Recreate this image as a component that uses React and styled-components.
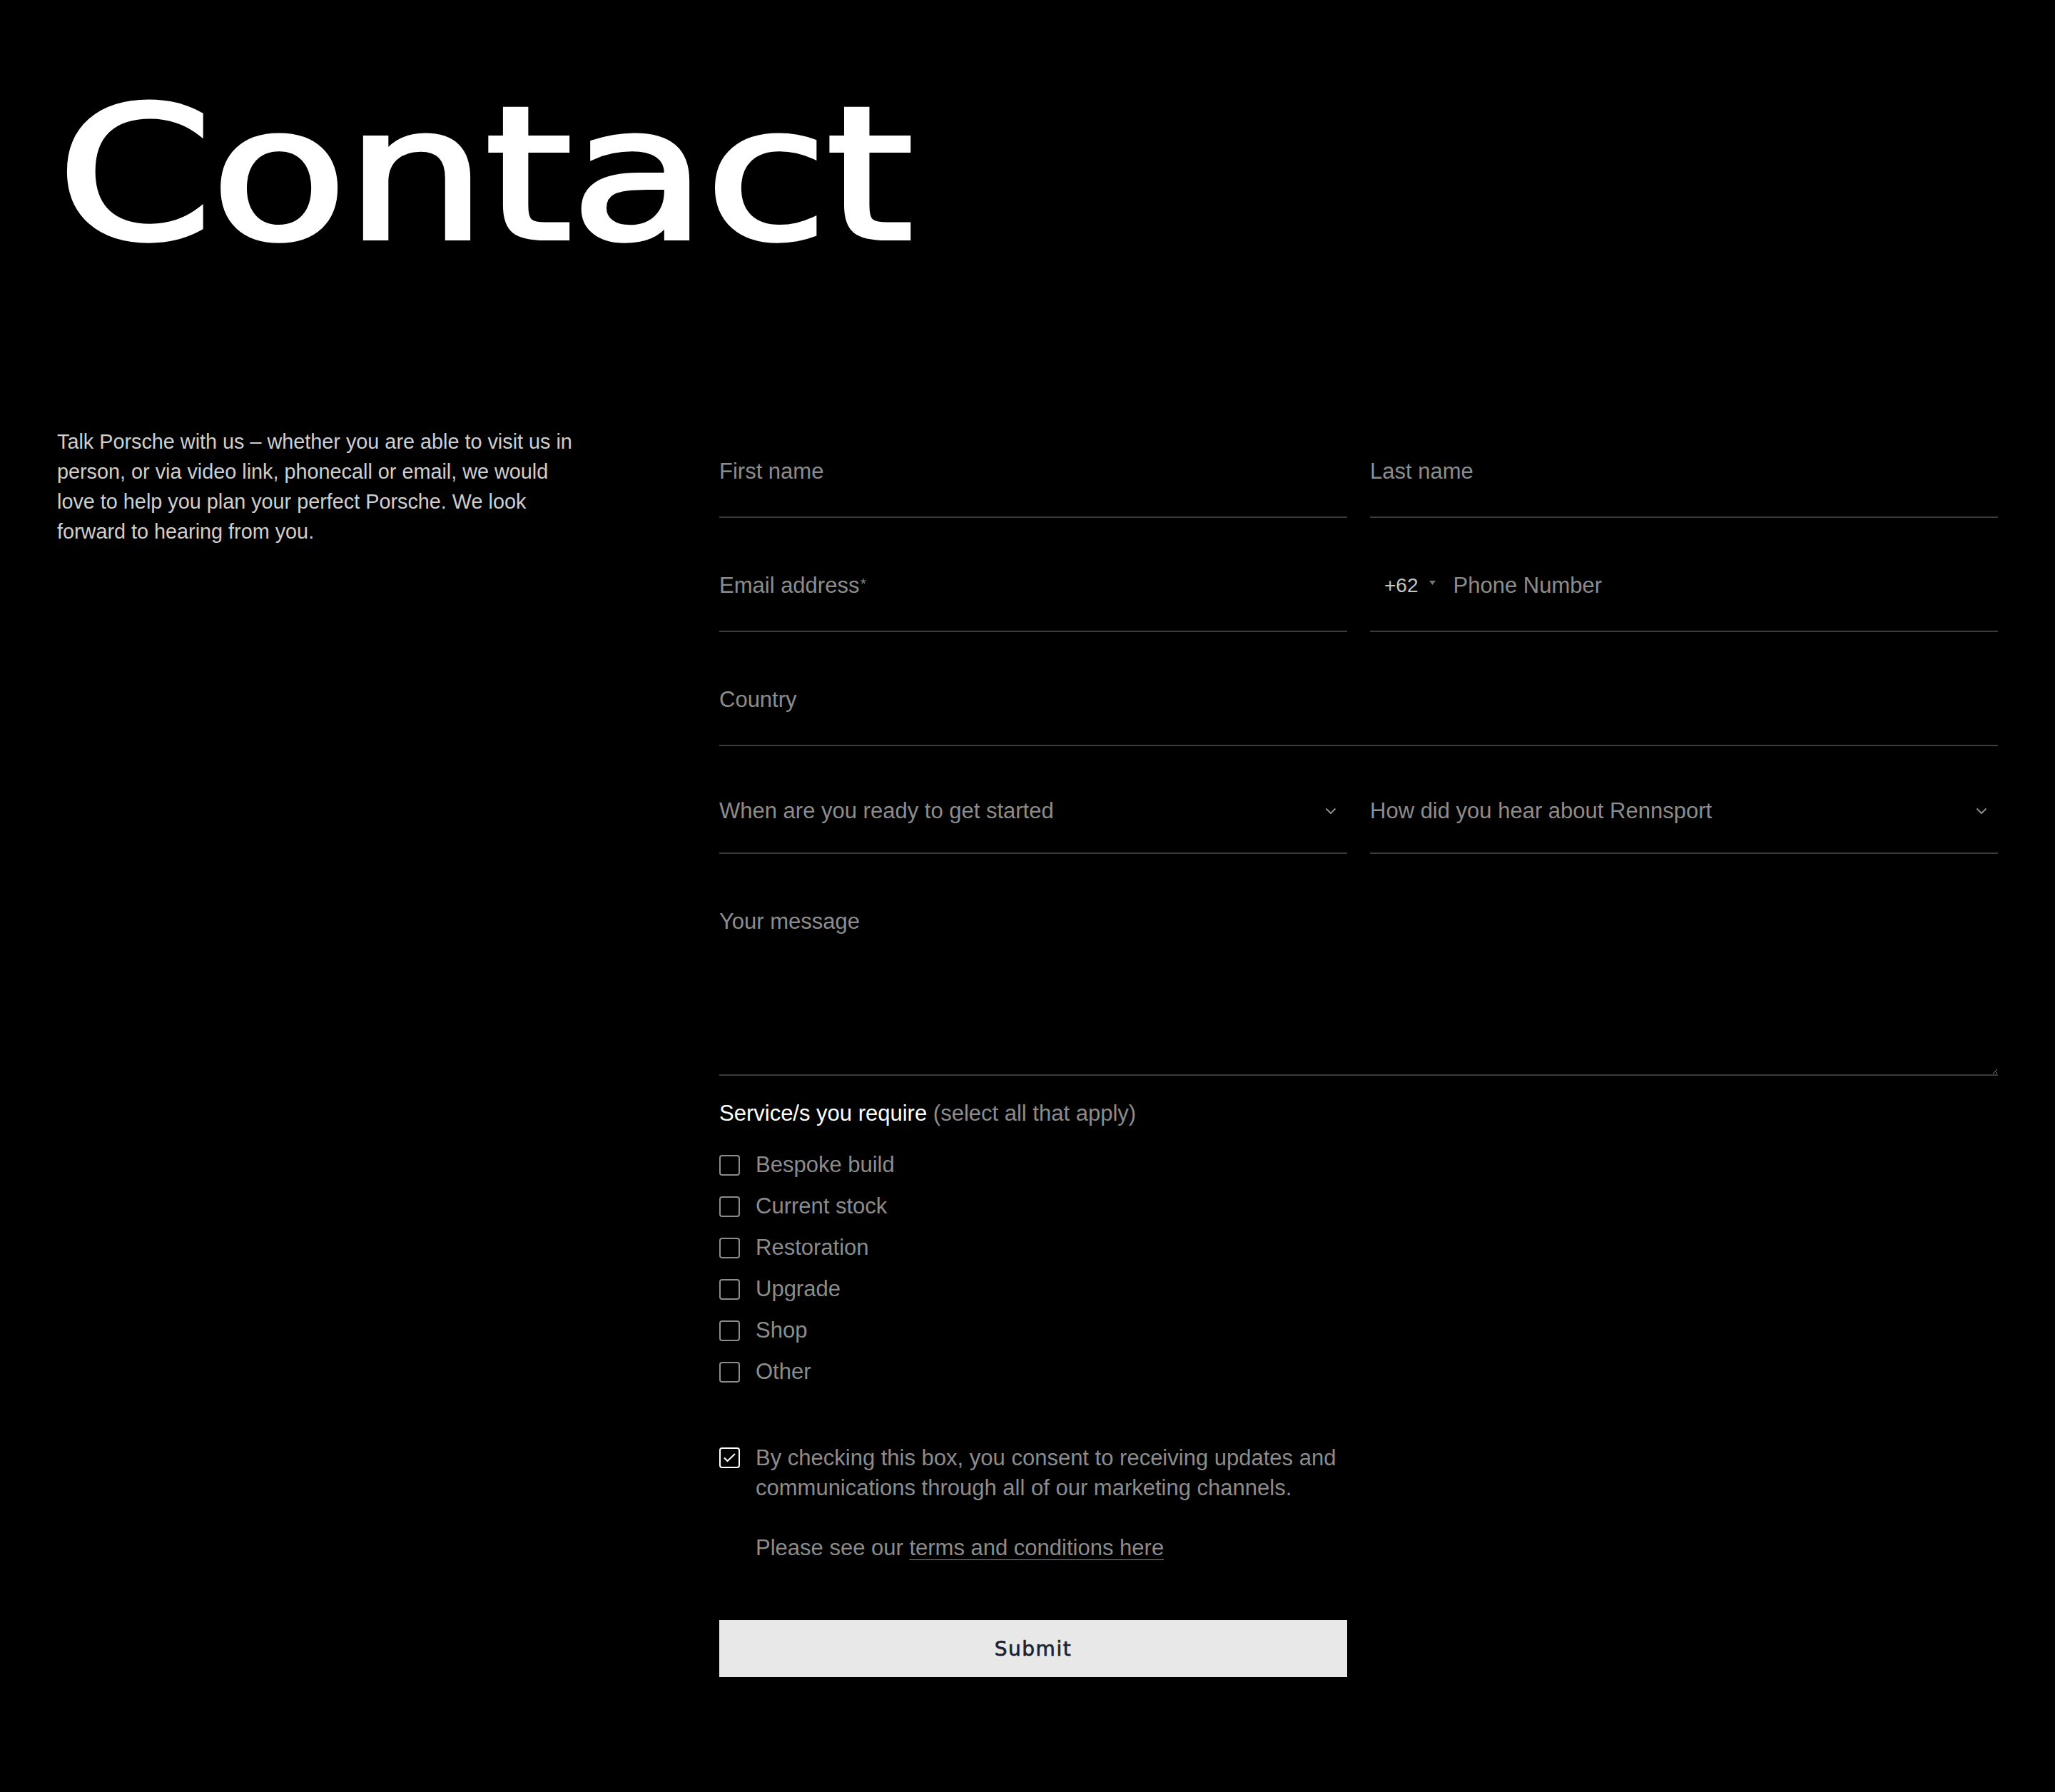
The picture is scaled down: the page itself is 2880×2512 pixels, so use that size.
import React from 'react';
import styled, { createGlobalStyle, css } from 'styled-components';


const GlobalStyle = createGlobalStyle`
    html, body {
        margin: 0;
        padding: 0;
        background: #000;
    }
    * {
        box-sizing: border-box;
    }
`;


const Page = styled.main`
    min-height: 2512px;
    padding: 0 80px 160px 80px;
    background: #000;
    font-family: 'Liberation Sans', Arial, sans-serif;
    overflow: hidden;
`;


const Title = styled.h1`
    width: fit-content;
    margin: 0;
    padding-top: 116px;
    font-family: 'DejaVu Sans', sans-serif;
    font-size: 258px;
    font-weight: 400;
    line-height: 1;
    letter-spacing: -2px;
    color: #fff;
    -webkit-text-stroke: 6px #fff;
    transform: scaleX(1.21);
    transform-origin: left center;
`;


const Layout = styled.div`
    display: grid;
    grid-template-columns: 928px 1fr;
    margin-top: 224px;
`;


const Intro = styled.p`
    margin: 0;
    width: 740px;
    font-size: 28.8px;
    line-height: 42px;
    color: #cfcfcf;
`;


const Form = styled.form`
    display: flex;
    flex-direction: column;
`;


const FieldGrid = styled.div`
    display: grid;
    grid-template-columns: 1fr 1fr;
    gap: 32px;
`;


const lineField = css`
    display: block;
    width: 100%;
    margin: 0;
    padding: 0;
    background: transparent;
    border: none;
    border-bottom: 2px solid #3b3b3b;
    border-radius: 0;
    outline: none;
    font-family: 'Liberation Sans', Arial, sans-serif;
    font-size: 31px;
    color: #8c8c8c;
    &::placeholder {
        color: #8c8c8c;
        opacity: 1;
    }
`;


const TextInput = styled.input`
    ${lineField};
    height: 128px;
    ${({ $full }) => $full && 'grid-column: 1 / -1;'}
`;


const FieldLabel = styled.label`
    position: relative;
    display: block;
`;


const Required = styled.span`
    position: absolute;
    top: 50px;
    left: 198px;
    font-size: 20px;
    line-height: 1;
    color: #8c8c8c;
    pointer-events: none;
`;


const PhoneField = styled.div`
    display: flex;
    align-items: center;
    height: 128px;
    padding-left: 20px;
    border-bottom: 2px solid #3b3b3b;
`;


const CountryCode = styled.span`
    display: flex;
    align-items: center;
    gap: 15px;
    margin-right: 25px;
    font-size: 28px;
    color: #c4c4c4;
    svg {
        margin-top: -8px;
    }
`;


const PhoneInput = styled.input`
    ${lineField};
    flex: 1;
    height: 100%;
    border-bottom: none;
`;


const SelectField = styled.label`
    display: flex;
    align-items: center;
    gap: 12px;
    height: 119px;
    padding-right: 15px;
    border-bottom: 2px solid #3b3b3b;
`;


const Select = styled.select`
    ${lineField};
    flex: 1;
    height: 100%;
    border-bottom: none;
    appearance: none;
    cursor: pointer;
    option {
        background: #000;
    }
`;


const Message = styled.textarea`
    ${lineField};
    grid-column: 1 / -1;
    height: 279px;
    padding-top: 42px;
    line-height: 42px;
    resize: vertical;
    color-scheme: dark;
`;


const Services = styled.fieldset`
    margin: 32px 0 0;
    padding: 0;
    border: none;
`;


const ServicesTitle = styled.p`
    margin: 0 0 30px;
    font-size: 31px;
    line-height: 42px;
    color: #fff;
    span {
        color: #8c8c8c;
    }
`;


const CheckList = styled.div`
    display: flex;
    flex-direction: column;
    gap: 16px;
`;


const CheckRow = styled.label`
    display: flex;
    align-items: center;
    gap: 22px;
    height: 42px;
    font-size: 31px;
    color: #8c8c8c;
    cursor: pointer;
`;


const Box = styled.span`
    display: flex;
    align-items: center;
    justify-content: center;
    flex-shrink: 0;
    width: 29px;
    height: 29px;
    margin-top: ${({ $offset }) => $offset || 0}px;
    border: 2px solid ${({ $checked }) => ($checked ? '#fff' : '#8c8c8c')};
    border-radius: 4px;
`;


const Consent = styled.div`
    display: flex;
    align-items: flex-start;
    gap: 22px;
    width: 880px;
    margin-top: 79px;
`;


const ConsentText = styled.div`
    font-size: 31px;
    line-height: 42px;
    color: #8c8c8c;
    p {
        margin: 0;
    }
    p + p {
        margin-top: 42px;
    }
`;


const TermsLink = styled.a`
    color: inherit;
    text-decoration: underline;
    text-decoration-thickness: 1px;
    text-underline-offset: 6px;
`;


const SubmitButton = styled.button`
    width: 880px;
    height: 80px;
    margin-top: 80px;
    padding: 0;
    border: none;
    border-radius: 0;
    background: #e8e8e8;
    font-family: 'DejaVu Sans', sans-serif;
    font-size: 28px;
    letter-spacing: 1.5px;
    color: #1b2232;
    -webkit-text-stroke: 0.7px #1b2232;
    cursor: pointer;
`;


const Chevron = () => (
    <svg width="16" height="10" viewBox="0 0 16 10" fill="none">
        <path d="M1.5 1.5L8 8l6.5-6.5" stroke="#8c8c8c" strokeWidth="2" />
    </svg>
);


const Caret = () => (
    <svg width="9" height="6" viewBox="0 0 9 6">
        <path d="M0 0h9L4.5 6z" fill="#777" />
    </svg>
);


const Tick = () => (
    <svg width="19" height="15" viewBox="0 0 19 15" fill="none">
        <path d="M2 7.5l4.5 4.5L17 2" stroke="#fff" strokeWidth="2" />
    </svg>
);


const services = ['Bespoke build', 'Current stock', 'Restoration', 'Upgrade', 'Shop', 'Other'];


function App() {
    return (
        <Page>
            <GlobalStyle />
            <Title>Contact</Title>
            <Layout>
                <Intro>
                    Talk Porsche with us – whether you are able to visit us in person, or via video link, phonecall or email, we would love to help you plan your perfect Porsche. We look forward to hearing from you.
                </Intro>
                <Form onSubmit={(e) => e.preventDefault()}>
                    <FieldGrid>
                        <TextInput placeholder="First name" />
                        <TextInput placeholder="Last name" />
                        <FieldLabel>
                            <TextInput placeholder="Email address" />
                            <Required>*</Required>
                        </FieldLabel>
                        <PhoneField>
                            <CountryCode>+62 <Caret /></CountryCode>
                            <PhoneInput placeholder="Phone Number" />
                        </PhoneField>
                        <TextInput $full placeholder="Country" />
                        <SelectField>
                            <Select defaultValue="">
                                <option value="" disabled>When are you ready to get started</option>
                                <option>Immediately</option>
                                <option>Within 6 months</option>
                            </Select>
                            <Chevron />
                        </SelectField>
                        <SelectField>
                            <Select defaultValue="">
                                <option value="" disabled>How did you hear about Rennsport</option>
                                <option>Social media</option>
                                <option>Friend</option>
                            </Select>
                            <Chevron />
                        </SelectField>
                        <Message placeholder="Your message" />
                    </FieldGrid>

                    <Services>
                        <ServicesTitle>Service/s you require <span>(select all that apply)</span></ServicesTitle>
                        <CheckList>
                            {services.map((s) => (
                                <CheckRow key={s}>
                                    <Box />
                                    {s}
                                </CheckRow>
                            ))}
                        </CheckList>
                    </Services>

                    <Consent>
                        <Box $checked $offset={6}><Tick /></Box>
                        <ConsentText>
                            <p>By checking this box, you consent to receiving updates and communications through all of our marketing channels.</p>
                            <p>Please see our <TermsLink href="#">terms and conditions here</TermsLink></p>
                        </ConsentText>
                    </Consent>

                    <SubmitButton type="submit">Submit</SubmitButton>
                </Form>
            </Layout>
        </Page>
    );
}


export default App;
